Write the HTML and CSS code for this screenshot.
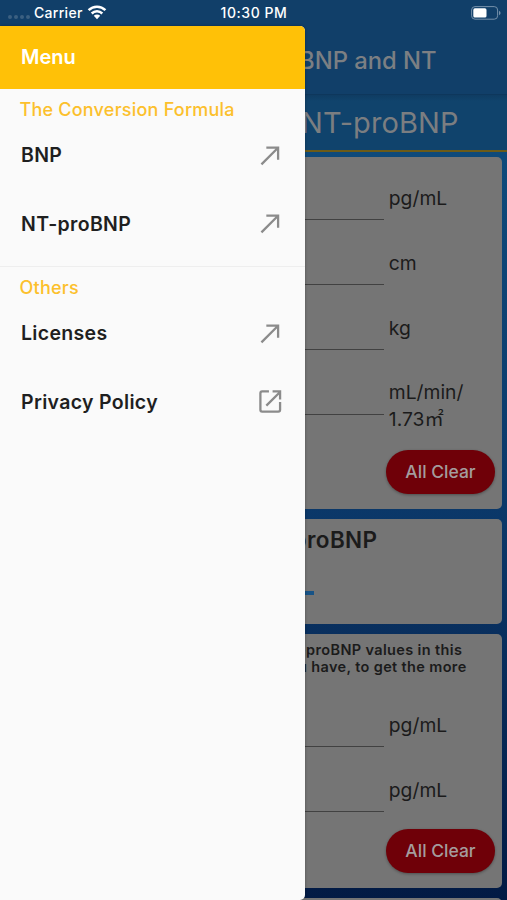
FILE: index.html
```html
<!DOCTYPE html>
<html lang="en">
<head>
<meta charset="utf-8">
<title>BNP and NT</title>
<link rel="stylesheet" href="styles.css">
</head>
<body>
<div class="app">
  <header class="status">
    <div class="carrier">
      <span class="dots"><i></i><i></i><i></i><i></i></span>
      <span class="carrier-name">Carrier</span>
      <svg class="wifi" viewBox="0 0 20 15"><path d="M1.6 5.2a12 12 0 0 1 16.8 0M4.7 8.5a7.5 7.5 0 0 1 10.6 0" fill="none" stroke="#fff" stroke-width="2.5"/><path d="M6.8 10.8a4.5 4.5 0 0 1 6.4 0L10 14.2z" fill="#fff"/></svg>
    </div>
    <span class="clock">10:30 PM</span>
    <svg class="battery" viewBox="0 0 30 14"><rect x=".6" y=".6" width="26" height="12.6" rx="3.4" fill="none" stroke="#7590aa" stroke-width="1"/><rect x="2.3" y="2.3" width="13.2" height="9.2" rx="1.6" fill="#fff"/><path d="M28 4.8q1.6.8 1.6 2.2T28 9.2z" fill="#7590aa"/></svg>
  </header>
  <div class="appbar"><span>BNP and NT</span></div>
  <div class="band"><span>NT-proBNP</span></div>
  <main class="content">
    <section class="card card-inputs">
      <div class="field"><div class="line"></div><div class="unit">pg/mL</div></div>
      <div class="field"><div class="line"></div><div class="unit">cm</div></div>
      <div class="field"><div class="line"></div><div class="unit">kg</div></div>
      <div class="field"><div class="line"></div><div class="unit two">mL/min/<br>1.73㎡</div></div>
      <button class="clear">All Clear</button>
    </section>
    <section class="card card-result">
      <h2>proBNP</h2>
      <div class="dash"></div>
    </section>
    <section class="card card-values">
      <p class="note"><span class="n1">-proBNP values in this</span><span class="n2">u have, to get the more</span></p>
      <div class="field"><div class="line"></div><div class="unit">pg/mL</div></div>
      <div class="field"><div class="line"></div><div class="unit">pg/mL</div></div>
      <button class="clear">All Clear</button>
    </section>
    <section class="card card-next"></section>
  </main>
  <nav class="drawer">
    <div class="drawer-head"><span>Menu</span></div>
    <h3><span>The Conversion Formula</span></h3>
    <a class="item"><span>BNP</span><svg viewBox="0 0 24 24"><path d="M3.300 20.500 19 4.800M8 4.500h11.300v11.500"/></svg></a>
    <a class="item"><span>NT-proBNP</span><svg viewBox="0 0 24 24"><path d="M3.300 20.500 19 4.800M8 4.500h11.300v11.500"/></svg></a>
    <div class="divider"></div>
    <h3><span>Others</span></h3>
    <a class="item"><span>Licenses</span><svg viewBox="0 0 24 24"><path d="M3.300 20.500 19 4.800M8 4.500h11.300v11.500"/></svg></a>
    <a class="item"><span>Privacy Policy</span><svg viewBox="0 0 24 24"><path d="M10.500 2.300H4Q2.300 2.300 2.300 4V20Q2.300 21.700 4 21.700H19.500Q21.200 21.700 21.200 20V12.500M14 2.300H21.200V10M8 16 20.700 3.300"/></svg></a>
  </nav>
</div>
</body>
</html>
```
FILE: styles.css
```css
* { box-sizing: border-box; }
body { margin: 0; font-family: Inter, "Noto Sans CJK JP", sans-serif; }
.app { position: relative; width: 507px; height: 900px; overflow: hidden; display: flex; flex-direction: column; background: #113f69; }
.status { height: 26px; flex: none; display: grid; grid-template-columns: 1fr auto 1fr; align-items: center; padding: 0 6px 1px 8px; color: #fff; font-size: 14px; font-weight: 500; }
.carrier { display: flex; align-items: center; }
.carrier-name { letter-spacing: .3px; }
.dots { display: flex; gap: 2px; width: 26px; padding-top: 8px; }
.dots i { width: 4px; height: 4px; border-radius: 50%; background: #3b6081; }
.wifi { width: 20px; height: 15px; margin-left: 4px; }
.clock { letter-spacing: .55px; margin-left: -1px; }
.battery { width: 30px; height: 14px; justify-self: end; }
.appbar { height: 69px; flex: none; padding: 0 0 0 299px; display: flex; align-items: center; color: #7c7f83; font-size: 23.8px; font-weight: 500; border-bottom: 1px solid #0e375c; white-space: nowrap; }
.band { height: 57px; flex: none; padding-left: 301px; display: flex; align-items: center; color: #7b7e81; font-size: 29px; letter-spacing: .1px; background: linear-gradient(#0f3c62, #10436c 6px); border-bottom: 2px solid #6c5b18; white-space: nowrap; }
.content { flex: 1; padding: 5px 5px 0 0; display: flex; flex-direction: column; gap: 10px; background: linear-gradient(#0e4a7b, #0b3768 50%, #021a44); overflow: hidden; }
.card { flex: none; padding-left: 304px; background: #757575; border-radius: 5px; color: #1b1b1b; display: flex; flex-direction: column; }
.card-inputs { height: 352px; padding-top: 9px; }
.field { height: 65px; flex: none; display: flex; align-items: center; }
.line { width: 80px; height: 1px; margin-top: 41px; background: #414141; }
.unit { margin-left: 4.8px; font-size: 19.3px; line-height: 27px; white-space: nowrap; }
.two { padding-top: 24px; }
.clear { align-self: flex-end; flex: none; width: 109px; height: 44px; margin: 24px 7px 0 0; padding: 0 0 1px; border: 0; border-radius: 22px; background: #6f0008; color: #a49c9d; font: 500 17.5px Inter, sans-serif; box-shadow: 0 1px 3px #0005; }
.card-result { height: 105px; }
h2 { margin: 7px 0 0 -11.5px; font-size: 22.5px; line-height: 28px; font-weight: 600; letter-spacing: .4px; }
.dash { width: 10px; height: 4px; margin-top: 37px; background: #175386; }
.card-values { height: 254px; padding-top: 7px; }
.note { margin: 0 0 18px; font-size: 14.5px; line-height: 17px; font-weight: 600; letter-spacing: .36px; white-space: nowrap; }
.note span { display: block; }
.n1 { margin-left: -5px; }
.n2 { margin-left: -6px; }
.card-values .clear { margin-top: 6px; }
.card-next { height: 60px; }
.drawer { position: absolute; left: 0; top: 26px; width: 304.5px; height: 874px; background: #fafafa; border-radius: 0 5px 5px 0; overflow: hidden; box-shadow: 0 0 3px #0005; color: #1f1f1f; }
.drawer-head { height: 63px; padding: 0 0 2px 21px; display: flex; align-items: center; background: #ffc107; color: #fff; font-size: 20px; font-weight: 600; }
h3 { margin: 0; height: 32px; padding: 9px 0 0 19.5px; color: #fcc02c; font-size: 18px; line-height: 24px; font-weight: 500; letter-spacing: .22px; white-space: nowrap; }
.item { height: 68.5px; padding: 0 22px 0 21px; display: flex; justify-content: space-between; align-items: center; font-size: 19.5px; font-weight: 600; letter-spacing: .32px; white-space: nowrap; }
.item svg { width: 25px; height: 25px; fill: none; stroke: #8b8b8b; stroke-width: 2.2; }
.divider { height: 1px; margin-top: 8px; background: #eee; }
```
